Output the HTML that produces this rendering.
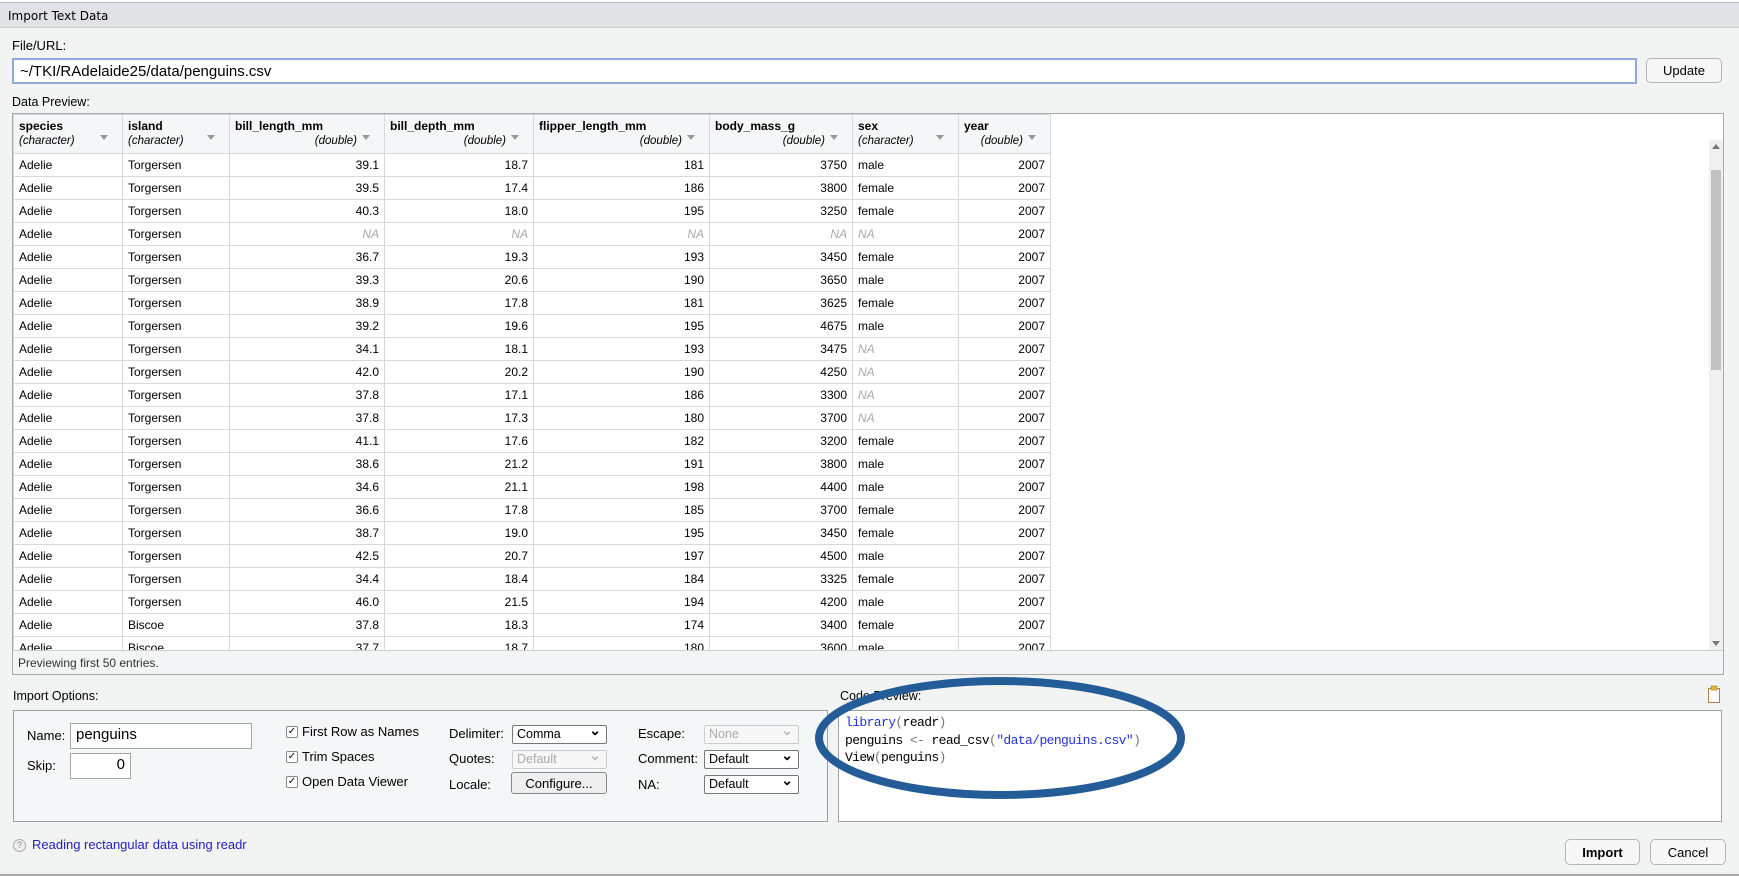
<!DOCTYPE html>
<html><head><meta charset="utf-8"><style>
*{box-sizing:border-box;margin:0;padding:0}
body{width:1739px;height:876px;background:#f2f3f3;font-family:"Liberation Sans",sans-serif;color:#000;position:relative;overflow:hidden;font-size:13px}
.abs{position:absolute}
#tabs{left:0;top:0;width:1739px;height:3px;background:#fff;border-bottom:1px solid #bbb}
#title{left:0;top:3px;width:1739px;height:25px;background:#e1e2e5;border-bottom:1px solid #cfd0d2;font-size:12px;padding:6px 0 0 8px;font-family:"DejaVu Sans",sans-serif}
.lbl{font-size:13px}
#url{left:12px;top:58px;width:1625px;height:26px;background:#fff;border:2px solid #8ea9da;font-size:15px;padding:3px 6px}
.btn{background:#f7f7f8;border:1px solid #b5b5b5;border-radius:5px;font-size:13px;text-align:center}
#tbl{left:12px;top:113px;width:1712px;height:562px;background:#fff;border:1px solid #a9a9a9;overflow:hidden}
table{border-collapse:collapse;table-layout:fixed;position:absolute;left:0;top:0}
td,th{border:1px solid #d6d9dc;font-size:12px;height:23px;padding:0 5px;white-space:nowrap;overflow:hidden}
th{height:39px;background:#f5f6f7;text-align:left;vertical-align:top;padding-top:4px;font-weight:bold;position:relative}
th i{display:block;font-weight:normal;font-size:11.5px;margin-top:2px;padding-right:22px}
th.r i{text-align:right}
th:after{content:"";position:absolute;right:14px;top:20px;border:4px solid transparent;border-top:5px solid #999}
td.r{text-align:right}
td.na{color:#aaa;font-style:italic}
#foot{left:0;top:536px;width:1710px;height:25px;background:#f3f4f5;border-top:1px solid #ccc;font-size:12px;padding:5px 5px;color:#333}
#sb{left:1696px;top:26px;width:14px;height:510px;background:#f0f0f0}
#thumb{left:2px;top:30px;width:10px;height:200px;background:#c1c1c1}
.box{border:1px solid #a0a0a0;background:#f5f6f7}
.inp{background:#fff;border:1px solid #a5a5a5;font-size:15px;padding:2px 5px}
.sel{background:#fff;border:1px solid #777;border-radius:2px;font-size:12.5px;padding:1px 4px;height:19px}
.sel:after{content:"⌄";position:absolute;right:5px;top:-4px;font-weight:bold;font-size:14px}
.sel.dis{border-color:#ccc;color:#aaa;background:#f7f7f7}
.sel.dis:after{color:#bbb}
.cb{width:12px;height:12px;border:1px solid #888;border-radius:2px;background:#fff;font-size:10px;line-height:10px;text-align:center}
.code{font-family:"Liberation Mono",monospace;font-size:13px;letter-spacing:-0.6px}
</style></head><body>
<div id="tabs" class="abs"></div>
<div id="title" class="abs">Import Text Data</div>
<div class="abs lbl" style="left:12px;top:38px">File/URL:</div>
<div id="url" class="abs">~/TKI/RAdelaide25/data/penguins.csv</div>
<div class="abs btn" style="left:1646px;top:58px;width:76px;height:25px;padding-top:4px">Update</div>
<div class="abs lbl" style="left:12px;top:95px;font-size:12.5px">Data Preview:</div>
<div id="tbl" class="abs">
<table>
<colgroup><col style="width:109px"><col style="width:107px"><col style="width:155px"><col style="width:149px"><col style="width:176px"><col style="width:143px"><col style="width:106px"><col style="width:92px"></colgroup>
<tr><th>species<i>(character)</i></th><th>island<i>(character)</i></th><th class="r">bill_length_mm<i>(double)</i></th><th class="r">bill_depth_mm<i>(double)</i></th><th class="r">flipper_length_mm<i>(double)</i></th><th class="r">body_mass_g<i>(double)</i></th><th>sex<i>(character)</i></th><th class="r">year<i>(double)</i></th></tr>
<tr><td>Adelie</td><td>Torgersen</td><td class="r">39.1</td><td class="r">18.7</td><td class="r">181</td><td class="r">3750</td><td>male</td><td class="r">2007</td></tr>
<tr><td>Adelie</td><td>Torgersen</td><td class="r">39.5</td><td class="r">17.4</td><td class="r">186</td><td class="r">3800</td><td>female</td><td class="r">2007</td></tr>
<tr><td>Adelie</td><td>Torgersen</td><td class="r">40.3</td><td class="r">18.0</td><td class="r">195</td><td class="r">3250</td><td>female</td><td class="r">2007</td></tr>
<tr><td>Adelie</td><td>Torgersen</td><td class="r na">NA</td><td class="r na">NA</td><td class="r na">NA</td><td class="r na">NA</td><td class="na">NA</td><td class="r">2007</td></tr>
<tr><td>Adelie</td><td>Torgersen</td><td class="r">36.7</td><td class="r">19.3</td><td class="r">193</td><td class="r">3450</td><td>female</td><td class="r">2007</td></tr>
<tr><td>Adelie</td><td>Torgersen</td><td class="r">39.3</td><td class="r">20.6</td><td class="r">190</td><td class="r">3650</td><td>male</td><td class="r">2007</td></tr>
<tr><td>Adelie</td><td>Torgersen</td><td class="r">38.9</td><td class="r">17.8</td><td class="r">181</td><td class="r">3625</td><td>female</td><td class="r">2007</td></tr>
<tr><td>Adelie</td><td>Torgersen</td><td class="r">39.2</td><td class="r">19.6</td><td class="r">195</td><td class="r">4675</td><td>male</td><td class="r">2007</td></tr>
<tr><td>Adelie</td><td>Torgersen</td><td class="r">34.1</td><td class="r">18.1</td><td class="r">193</td><td class="r">3475</td><td class="na">NA</td><td class="r">2007</td></tr>
<tr><td>Adelie</td><td>Torgersen</td><td class="r">42.0</td><td class="r">20.2</td><td class="r">190</td><td class="r">4250</td><td class="na">NA</td><td class="r">2007</td></tr>
<tr><td>Adelie</td><td>Torgersen</td><td class="r">37.8</td><td class="r">17.1</td><td class="r">186</td><td class="r">3300</td><td class="na">NA</td><td class="r">2007</td></tr>
<tr><td>Adelie</td><td>Torgersen</td><td class="r">37.8</td><td class="r">17.3</td><td class="r">180</td><td class="r">3700</td><td class="na">NA</td><td class="r">2007</td></tr>
<tr><td>Adelie</td><td>Torgersen</td><td class="r">41.1</td><td class="r">17.6</td><td class="r">182</td><td class="r">3200</td><td>female</td><td class="r">2007</td></tr>
<tr><td>Adelie</td><td>Torgersen</td><td class="r">38.6</td><td class="r">21.2</td><td class="r">191</td><td class="r">3800</td><td>male</td><td class="r">2007</td></tr>
<tr><td>Adelie</td><td>Torgersen</td><td class="r">34.6</td><td class="r">21.1</td><td class="r">198</td><td class="r">4400</td><td>male</td><td class="r">2007</td></tr>
<tr><td>Adelie</td><td>Torgersen</td><td class="r">36.6</td><td class="r">17.8</td><td class="r">185</td><td class="r">3700</td><td>female</td><td class="r">2007</td></tr>
<tr><td>Adelie</td><td>Torgersen</td><td class="r">38.7</td><td class="r">19.0</td><td class="r">195</td><td class="r">3450</td><td>female</td><td class="r">2007</td></tr>
<tr><td>Adelie</td><td>Torgersen</td><td class="r">42.5</td><td class="r">20.7</td><td class="r">197</td><td class="r">4500</td><td>male</td><td class="r">2007</td></tr>
<tr><td>Adelie</td><td>Torgersen</td><td class="r">34.4</td><td class="r">18.4</td><td class="r">184</td><td class="r">3325</td><td>female</td><td class="r">2007</td></tr>
<tr><td>Adelie</td><td>Torgersen</td><td class="r">46.0</td><td class="r">21.5</td><td class="r">194</td><td class="r">4200</td><td>male</td><td class="r">2007</td></tr>
<tr><td>Adelie</td><td>Biscoe</td><td class="r">37.8</td><td class="r">18.3</td><td class="r">174</td><td class="r">3400</td><td>female</td><td class="r">2007</td></tr>
<tr><td>Adelie</td><td>Biscoe</td><td class="r">37.7</td><td class="r">18.7</td><td class="r">180</td><td class="r">3600</td><td>male</td><td class="r">2007</td></tr>
</table>
<div id="sb" class="abs"><div id="thumb" class="abs"></div>
<div class="abs" style="left:3px;top:4px;border:4px solid transparent;border-bottom:5px solid #777;border-top:0"></div>
<div class="abs" style="left:3px;top:501px;border:4px solid transparent;border-top:5px solid #777;border-bottom:0"></div></div>
<div id="foot" class="abs">Previewing first 50 entries.</div>
</div>

<div class="abs lbl" style="left:13px;top:689px;font-size:12.5px">Import Options:</div>
<div class="abs box" style="left:13px;top:710px;width:815px;height:112px"></div>
<div class="abs" style="left:27px;top:728px">Name:</div>
<div class="abs inp" style="left:70px;top:723px;width:182px;height:26px">penguins</div>
<div class="abs" style="left:27px;top:758px">Skip:</div>
<div class="abs inp" style="left:70px;top:753px;width:61px;height:26px;text-align:right">0</div>
<div class="abs cb" style="left:286px;top:726px">✓</div><div class="abs" style="left:302px;top:724px">First Row as Names</div>
<div class="abs cb" style="left:286px;top:751px">✓</div><div class="abs" style="left:302px;top:749px">Trim Spaces</div>
<div class="abs cb" style="left:286px;top:776px">✓</div><div class="abs" style="left:302px;top:774px">Open Data Viewer</div>
<div class="abs" style="left:449px;top:726px">Delimiter:</div>
<div class="abs sel" style="left:512px;top:725px;width:95px;height:19px">Comma</div>
<div class="abs" style="left:449px;top:751px">Quotes:</div>
<div class="abs sel dis" style="left:512px;top:750px;width:95px;height:19px">Default</div>
<div class="abs" style="left:449px;top:777px">Locale:</div>
<div class="abs btn" style="left:511px;top:772px;width:96px;height:22px;padding-top:3px;border-radius:3px;background:#efefef;border-color:#888">Configure...</div>
<div class="abs" style="left:638px;top:726px">Escape:</div>
<div class="abs sel dis" style="left:704px;top:725px;width:95px;height:19px">None</div>
<div class="abs" style="left:638px;top:751px">Comment:</div>
<div class="abs sel" style="left:704px;top:750px;width:95px;height:19px">Default</div>
<div class="abs" style="left:638px;top:777px">NA:</div>
<div class="abs sel" style="left:704px;top:775px;width:95px;height:19px">Default</div>

<div class="abs lbl" style="left:840px;top:689px;font-size:12.5px">Code Preview:</div>
<svg class="abs" style="left:1706px;top:684px" width="16" height="20"><rect x="2.5" y="4.5" width="11" height="14" fill="#fff" stroke="#b08040"/><rect x="5" y="2" width="6" height="4" fill="#e8b830" stroke="#b08040" stroke-width=".7"/></svg>
<div class="abs" style="left:838px;top:710px;width:884px;height:112px;background:#fff;border:1px solid #a0a0a0"></div>
<div class="abs code" style="left:845px;top:714px;line-height:17.5px">
<div><span style="color:#2431d8">library</span><span style="color:#777">(</span>readr<span style="color:#777">)</span></div>
<div>penguins <span style="color:#777">&lt;-</span> read_csv<span style="color:#777">(</span><span style="color:#2431d8">"data/penguins.csv"</span><span style="color:#777">)</span></div>
<div>View<span style="color:#777">(</span>penguins<span style="color:#777">)</span></div>
</div>
<svg class="abs" style="left:810px;top:672px" width="380" height="134"><ellipse cx="190" cy="66" rx="181" ry="57" fill="none" stroke="#245c97" stroke-width="8"/></svg>

<div class="abs" style="left:13px;top:839px;width:13px;height:13px;border:1px solid #aaa;border-radius:50%;font-size:9px;text-align:center;line-height:11px;color:#888;background:#eee">?</div>
<div class="abs" style="left:32px;top:837px;color:#2222bb;font-size:13px">Reading rectangular data using readr</div>
<div class="abs btn" style="left:1565px;top:839px;width:75px;height:26px;padding-top:5px;font-weight:bold">Import</div>
<div class="abs btn" style="left:1650px;top:839px;width:76px;height:26px;padding-top:5px">Cancel</div>
<div class="abs" style="left:0;top:874px;width:1739px;height:2px;background:#aaa"></div>
</body></html>
